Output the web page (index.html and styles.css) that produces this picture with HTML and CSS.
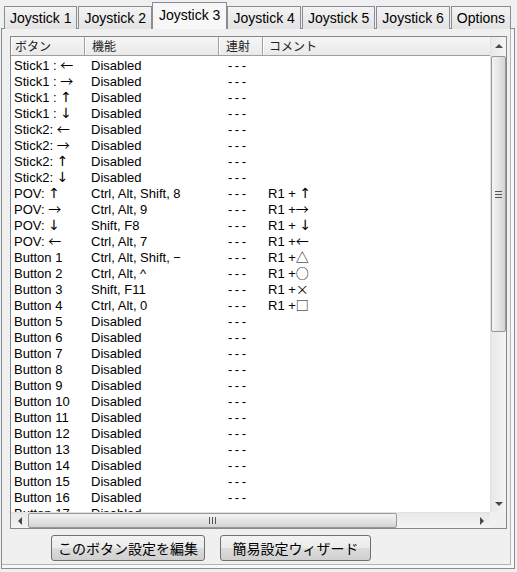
FILE: index.html
```html
<!DOCTYPE html>
<html lang="ja">
<head>
  <meta charset="UTF-8">
  <meta name="viewport" content="width=device-width, initial-scale=1.0">
  <title>Joystick 設定</title>
  <link rel="stylesheet" href="styles.css">
</head>
<body>
  <!-- Abas -->
  <div class="tabs">
    <div class="tab">Joystick 1</div>
    <div class="tab">Joystick 2</div>
    <div class="tab active">Joystick 3</div>
    <div class="tab">Joystick 4</div>
    <div class="tab">Joystick 5</div>
    <div class="tab">Joystick 6</div>
    <div class="tab">Options</div>
  </div>

  <div class="panel">
    <div class="list">
      <div class="view">
        <div class="row head">
          <div>ボタン</div>
          <div>機能</div>
          <div>連射</div>
          <div>コメント</div>
        </div>
        <div id="rows" class="rows"></div>
      </div>

      <div class="vscroll">
        <div class="arrow up"></div>
        <div class="vtrack">
          <div class="vthumb"><span class="grip"></span></div>
        </div>
        <div class="arrow down"></div>
      </div>

      <div class="hscroll">
        <div class="arrow left"></div>
        <div class="htrack">
          <div class="hthumb"><span class="grip"></span></div>
        </div>
        <div class="arrow right"></div>
      </div>

      <div class="corner"></div>
    </div>

    <div class="actions">
      <button class="btn btn-edit">このボタン設定を編集</button>
      <button class="btn btn-wizard">簡易設定ウィザード</button>
    </div>
  </div>

  <script>
    const mappings = [
      ["Stick1 : ←", "Disabled", ""],
      ["Stick1 : →", "Disabled", ""],
      ["Stick1 : ↑", "Disabled", ""],
      ["Stick1 : ↓", "Disabled", ""],
      ["Stick2: ←", "Disabled", ""],
      ["Stick2: →", "Disabled", ""],
      ["Stick2: ↑", "Disabled", ""],
      ["Stick2: ↓", "Disabled", ""],
      ["POV: ↑", "Ctrl, Alt, Shift, 8", "R1 + ↑"],
      ["POV: →", "Ctrl, Alt, 9", "R1 +→"],
      ["POV: ↓", "Shift, F8", "R1 + ↓"],
      ["POV: ←", "Ctrl, Alt, 7", "R1 +←"],
      ["Button 1", "Ctrl, Alt, Shift, −", "R1 +△"],
      ["Button 2", "Ctrl, Alt, ^", "R1 +○"],
      ["Button 3", "Shift, F11", "R1 +×"],
      ["Button 4", "Ctrl, Alt, 0", "R1 +□"]
    ];

    for (let i = 5; i <= 17; i++) {
      mappings.push(["Button " + i, "Disabled", ""]);
    }

    // setas e símbolos com fonte própria
    function symbols(text) {
      return text
        .replace(/([↑↓])/g, '<span class="vsym">$1</span>')
        .replace(/([←→△○×□])/g, '<span class="sym">$1</span>');
    }

    function renderRows() {
      const body = document.getElementById("rows");
      body.innerHTML = "";
      mappings.forEach((m) => {
        body.innerHTML += `
          <div class="row">
            <div>${symbols(m[0])}</div>
            <div>${m[1]}</div>
            <div class="rapid">---</div>
            <div>${symbols(m[2])}</div>
          </div>`;
      });
    }

    renderRows();
  </script>
</body>
</html>
```

FILE: styles.css
```css
* {
  margin: 0;
  padding: 0;
  box-sizing: border-box;
}

body {
  width: 517px;
  height: 572px;
  background-color: #f0f0f0;
  color: #000;
  font-family: "Liberation Sans", "Noto Sans CJK JP", sans-serif;
  overflow: hidden;
}

/* Abas */
.tabs {
  display: flex;
  align-items: flex-end;
  height: 29px;
  padding-left: 4px;
  margin-bottom: -1px;
}

.tab {
  height: 23px;
  padding: 0 5px;
  font-size: 14px;
  line-height: 22px;
  border: 1px solid #898c95;
  border-bottom: none;
  margin-right: 1px;
  background: linear-gradient(#f3f3f3, #e3e3e3);
  white-space: nowrap;
}

.tab.active {
  position: relative;
  z-index: 1;
  height: 27px;
  line-height: 24px;
  padding: 0 6px;
  margin: 0 -1px 0 -1px;
  background: #f7f7f7;
}

.tab.active + .tab {
  margin-left: 1px;
}

.panel {
  margin-left: 1px;
  width: 514px;
  height: 541px;
  border: 1px solid #898c95;
  box-shadow: inset -3px -3px 0 #f8f8f8, inset -4px -4px 0 #b5b5b5;
  background-color: #f0f0f0;
  padding: 7px 0 0 8px;
}

/* Lista */
.list {
  width: 497px;
  height: 493px;
  border: 1px solid #828790;
  background-color: #fff;
  display: grid;
  grid-template-columns: 1fr 16px;
  grid-template-rows: 1fr 16px;
}

.view {
  overflow: hidden;
}

.row {
  display: grid;
  grid-template-columns: 74px 134px 44px 1fr;
  height: 16px;
  font-size: 13px;
  line-height: 16px;
  white-space: nowrap;
}

.row > div {
  padding-left: 6px;
}

.row > div:first-child {
  padding-left: 3px;
}

.row > div:nth-child(4) {
  padding-left: 5px;
}

.row .rapid {
  padding-left: 9px;
  letter-spacing: 2.5px;
}

.sym {
  font-family: "Noto Sans CJK JP", sans-serif;
  font-size: 13px;
  line-height: 1;
}

.vsym {
  font-family: "DejaVu Sans", sans-serif;
  font-size: 14px;
  line-height: 1;
  font-variant-emoji: text;
}

.head {
  height: 19px;
  font-size: 12px;
  line-height: 18px;
  font-family: "Noto Sans CJK JP", sans-serif;
  background: linear-gradient(#f6f6f6, #e9e9e9);
  border-bottom: 1px solid #a0a0a0;
}

.head > div {
  border-right: 1px solid #a0a0a0;
  border-left: 1px solid #fff;
  color: #222;
}

.head > div:first-child {
  padding-left: 3px;
}

.head > div:last-child {
  border-right: none;
}

.rows {
  padding-top: 2px;
}

/* Barras de rolagem */
.vscroll {
  display: flex;
  flex-direction: column;
  background: linear-gradient(90deg, #e8e8e8, #f4f4f4);
  border-left: 1px solid #e2e2e2;
}

.hscroll {
  display: flex;
  background: linear-gradient(#e8e8e8, #f4f4f4);
  border-top: 1px solid #e2e2e2;
}

.corner {
  background-color: #f0f0f0;
}

.arrow {
  display: flex;
  align-items: center;
  justify-content: center;
  flex: 0 0 17px;
}

.arrow::before {
  content: "";
  width: 0;
  height: 0;
}

.arrow.up::before {
  border-left: 4px solid transparent;
  border-right: 4px solid transparent;
  border-bottom: 4px solid #4a4a4a;
}

.arrow.down::before {
  border-left: 4px solid transparent;
  border-right: 4px solid transparent;
  border-top: 4px solid #4a4a4a;
}

.arrow.left::before {
  border-top: 4px solid transparent;
  border-bottom: 4px solid transparent;
  border-right: 4px solid #4a4a4a;
}

.arrow.right::before {
  border-top: 4px solid transparent;
  border-bottom: 4px solid transparent;
  border-left: 4px solid #4a4a4a;
}

.vtrack,
.htrack {
  flex: 1;
}

.vthumb {
  margin: 2px 0 0 0;
  height: 276px;
  border: 1px solid #979797;
  border-radius: 2px;
  background: linear-gradient(90deg, #f4f4f4, #e2e2e2 60%, #d4d4d4);
  display: flex;
  align-items: center;
  justify-content: center;
}

.vthumb .grip {
  width: 7px;
  height: 7px;
  background: repeating-linear-gradient(#555 0 1px, transparent 1px 3px);
}

.hthumb {
  width: 369px;
  height: 15px;
  border: 1px solid #979797;
  border-radius: 2px;
  background: linear-gradient(#f4f4f4, #e2e2e2 60%, #d4d4d4);
  display: flex;
  align-items: center;
  justify-content: center;
}

.hthumb .grip {
  width: 7px;
  height: 7px;
  background: repeating-linear-gradient(90deg, #555 0 1px, transparent 1px 3px);
}

/* Botões */
.actions {
  display: flex;
  gap: 15px;
  padding-left: 41px;
  margin-top: 6px;
}

.btn {
  height: 26px;
  font-family: "Noto Sans CJK JP", sans-serif;
  font-size: 14px;
  line-height: 20px;
  color: #000;
  border: 1px solid #707070;
  border-radius: 3px;
  background: linear-gradient(#f3f3f3, #ebebeb 50%, #dddddd 50%, #cfcfcf);
  cursor: pointer;
}

.btn-edit {
  width: 154px;
}

.btn-wizard {
  width: 151px;
}
```
